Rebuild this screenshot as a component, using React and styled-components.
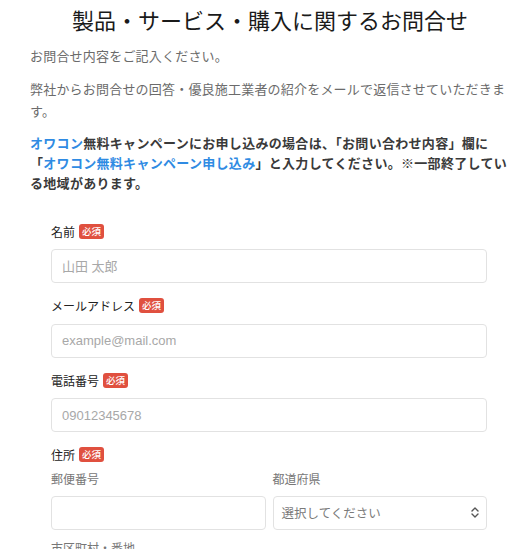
import React from "react";
import styled, { createGlobalStyle } from "styled-components";

const GlobalStyle = createGlobalStyle`
  body {
    margin: 0;
    background: #fff;
    font-family: "Liberation Sans", "Noto Sans CJK JP", sans-serif;
    color: #333;
  }
`;

const Page = styled.main`
  width: 480px;
  margin-left: 30px;
  padding-top: 6px;
`;

const Title = styled.h1`
  margin: 0;
  font-size: 22px;
  line-height: 32px;
  font-weight: 400;
  text-align: center;
  color: #1a1a1a;
`;

const Lead = styled.p`
  margin: ${(p) => p.$top}px 0 0;
  font-size: 13px;
  line-height: 22px;
  letter-spacing: 0.2px;
  color: #6b6b6b;
`;

const Notice = styled.p`
  margin: 11px 0 0;
  font-size: 13px;
  line-height: 20px;
  letter-spacing: 0.3px;
  font-weight: 700;
  color: #3a3a3a;
  white-space: nowrap;
`;

const Blue = styled.span`
  color: #2f8be3;
`;

const Form = styled.form`
  margin-top: 27px;
  padding: 0 23px 0 21px;
`;

const Field = styled.div`
  margin-bottom: 12.5px;
`;

const Label = styled.div`
  display: flex;
  align-items: center;
  gap: 4px;
  height: 20px;
  margin-bottom: 8px;
  font-size: 12px;
  color: #222;
`;

const Badge = styled.span`
  display: inline-block;
  padding: 0 3px;
  height: 15px;
  line-height: 15px;
  border-radius: 3px;
  background: #e0503f;
  color: #fff;
  font-size: 9.5px;
  font-weight: 500;
`;

const Input = styled.input`
  box-sizing: border-box;
  display: block;
  width: 100%;
  height: 34px;
  padding: 0 10px;
  border: 1px solid #e2e2e2;
  border-radius: 4px;
  font-family: "Liberation Sans", "Noto Sans CJK JP", sans-serif;
  font-size: 13px;
  color: #333;
  background: #fff;
  outline: none;

  &::placeholder {
    color: #a8a8a8;
  }
`;

const Row = styled.div`
  display: grid;
  grid-template-columns: 1fr 1fr;
  column-gap: 7px;
`;

const SubLabel = styled.div`
  height: 20px;
  line-height: 20px;
  margin: -3px 0 6px;
  font-size: 12px;
  color: #777;
`;

const SelectBox = styled.div`
  box-sizing: border-box;
  display: flex;
  align-items: center;
  justify-content: space-between;
  height: 34px;
  padding: 0 7px 0 8px;
  border: 1px solid #e2e2e2;
  border-radius: 4px;
  font-size: 12.5px;
  color: #7a7a7a;
`;

const Chevrons = () => (
  <svg width="8" height="11" viewBox="0 0 8 11" fill="none" stroke="#555" strokeWidth="1.4" strokeLinecap="round" strokeLinejoin="round">
    <path d="M1 4 L4 1 L7 4" />
    <path d="M1 7 L4 10 L7 7" />
  </svg>
);

const fields = [
  { label: "名前", placeholder: "山田 太郎" },
  { label: "メールアドレス", placeholder: "example@mail.com" },
  { label: "電話番号", placeholder: "09012345678" },
];

export default function App() {
  return (
    <>
      <GlobalStyle />
      <Page>
        <Title>製品・サービス・購入に関するお問合せ</Title>
        <Lead $top={8}>お問合せ内容をご記入ください。</Lead>
        <Lead $top={11}>
          弊社からお問合せの回答・優良施工業者の紹介をメールで返信させていただきます。
        </Lead>
        <Notice>
          <Blue>オワコン</Blue>無料キャンペーンにお申し込みの場合は、「お問い合わせ内容」欄に
          <br />「<Blue>オワコン無料キャンペーン申し込み</Blue>」と入力してください。※一部終了してい
          <br />る地域があります。
        </Notice>

        <Form>
          {fields.map((f) => (
            <Field key={f.label}>
              <Label>
                {f.label}
                <Badge>必須</Badge>
              </Label>
              <Input placeholder={f.placeholder} />
            </Field>
          ))}

          <Field>
            <Label>
              住所
              <Badge>必須</Badge>
            </Label>
            <Row>
              <div>
                <SubLabel>郵便番号</SubLabel>
                <Input />
              </div>
              <div>
                <SubLabel>都道府県</SubLabel>
                <SelectBox>
                  選択してください
                  <Chevrons />
                </SelectBox>
              </div>
            </Row>
          </Field>
          <SubLabel>市区町村・番地</SubLabel>
          <Input />
        </Form>
      </Page>
    </>
  );
}
